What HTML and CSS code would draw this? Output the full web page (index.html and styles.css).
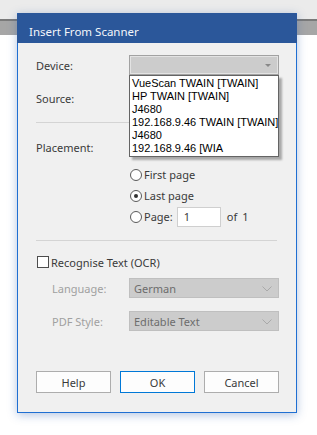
FILE: index.html
```html
<!DOCTYPE html>
<html lang="en">
<head>
  <meta charset="UTF-8">
  <meta name="viewport" content="width=device-width, initial-scale=1.0">
  <title>Insert From Scanner</title>
  <link rel="stylesheet" href="styles.css">
</head>
<body>

<!-- Window behind the dialog -->
<div class="desk">
  <div class="desk-top"></div>
  <div class="desk-band"></div>
  <div class="desk-page"></div>
</div>

<div class="dialog">
  <div class="titlebar">Insert From Scanner</div>

  <div class="content">
    <!-- Device / Source / Placement -->
    <div class="row">
      <label class="label">Device:</label>
      <div class="combo-wrap">
        <div class="combo combo-open">
          <span class="combo-text"></span>
          <span class="arrow-small"></span>
        </div>
        <ul class="droplist">
          <li>VueScan TWAIN [TWAIN]</li>
          <li>HP TWAIN [TWAIN]</li>
          <li>J4680</li>
          <li>192.168.9.46 TWAIN [TWAIN]</li>
          <li>J4680</li>
          <li>192.168.9.46 [WIA</li>
        </ul>
      </div>
    </div>

    <div class="row row-source">
      <label class="label">Source:</label>
      <div class="combo"></div>
    </div>

    <div class="sep sep-first"></div>

    <div class="row">
      <label class="label">Placement:</label>
      <div class="combo"></div>
    </div>

    <div class="radios">
      <div class="radio-row">
        <span class="radio"></span>
        <span>First page</span>
      </div>
      <div class="radio-row">
        <span class="radio checked"></span>
        <span>Last page</span>
      </div>
      <div class="radio-row">
        <span class="radio"></span>
        <span>Page:</span>
        <div class="page-input">1</div>
        <span class="page-of">of</span>
        <span>1</span>
      </div>
    </div>

    <div class="sep sep-second"></div>

    <!-- OCR -->
    <div class="check-row">
      <span class="checkbox"></span>
      <span>Recognise Text (OCR)</span>
    </div>

    <div class="row row-lang disabled">
      <label class="label sub">Language:</label>
      <div class="combo">
        <span class="combo-text">German</span>
        <svg class="chevron" width="10" height="6" viewBox="0 0 10 6">
          <polyline points="0.5,0.5 5,5 9.5,0.5" fill="none" stroke="#a9a9a9" stroke-width="1"/>
        </svg>
      </div>
    </div>

    <div class="row row-pdf disabled">
      <label class="label sub">PDF Style:</label>
      <div class="combo">
        <span class="combo-text">Editable Text</span>
        <svg class="chevron" width="10" height="6" viewBox="0 0 10 6">
          <polyline points="0.5,0.5 5,5 9.5,0.5" fill="none" stroke="#a9a9a9" stroke-width="1"/>
        </svg>
      </div>
    </div>

    <div class="buttons">
      <button class="btn">Help</button>
      <button class="btn btn-default">OK</button>
      <button class="btn">Cancel</button>
    </div>
  </div>
</div>

</body>
</html>
```

FILE: styles.css
```css
body {
  margin: 0;
  padding: 0;
  width: 317px;
  height: 435px;
  overflow: hidden;
  background-color: #fff;
  font-family: 'Noto Sans', 'Open Sans', sans-serif;
  font-size: 11px;
  color: #3a3a3a;
}

.desk-top {
  height: 19px;
  background-color: #ebebeb;
  border-bottom: 2px solid #7a7a7a;
}

.desk-band {
  height: 14px;
  background-color: #a6a6a6;
}

.desk-page {
  height: 400px;
  background-color: #fff;
}

.dialog {
  position: absolute;
  left: 17px;
  top: 13px;
  width: 280px;
  height: 400px;
  box-sizing: border-box;
  border: 1px solid #1f6fd2;
  border-top-color: #2b579a;
  background-color: #f0f0f0;
  box-shadow: 0 2px 9px rgba(40, 90, 170, 0.35);
}

.titlebar {
  height: 29px;
  box-sizing: border-box;
  margin: 0 -1px;
  padding: 10px 0 0 12px;
  background-color: #2b579a;
  color: #f4f6fa;
  font-size: 11.5px;
  line-height: 16px;
}

.content {
  padding: 12px 17px 0 18px;
}

.row {
  display: flex;
  align-items: center;
  height: 20px;
}

.label {
  width: 93px;
  flex-shrink: 0;
}

.label.sub {
  padding-left: 16px;
  width: 77px;
}

.combo-wrap {
  position: relative;
}

.combo {
  position: relative;
  width: 150px;
  height: 20px;
  box-sizing: border-box;
  border: 1px solid #adadad;
  background-color: #cccccc;
  display: flex;
  align-items: center;
}

.combo-open {
  border-color: #a2a2a2;
  box-shadow: inset 0 0 0 1px #e3e3e3;
}

.combo-text {
  padding-left: 4px;
  color: #6d6d6d;
}

.arrow-small {
  position: absolute;
  right: 7px;
  top: 8px;
  width: 0;
  height: 0;
  border-left: 3px solid transparent;
  border-right: 3px solid transparent;
  border-top: 3px solid #888;
}

.chevron {
  position: absolute;
  right: 6px;
  top: 7px;
}

/* open device list */
.droplist {
  position: absolute;
  left: 0;
  top: 20px;
  width: 150px;
  height: 82px;
  box-sizing: border-box;
  margin: 0;
  padding: 1px 0 0 2px;
  list-style: none;
  background-color: #fff;
  border: 1px solid #646464;
  box-shadow: 3px 3px 2px rgba(0, 0, 0, 0.3);
  font-family: 'Liberation Sans', Arial, sans-serif;
  font-size: 11px;
  line-height: 13px;
  color: #000;
  white-space: nowrap;
  overflow: hidden;
  z-index: 2;
}

.row-source {
  margin-top: 13px;
}

.sep {
  height: 1px;
  width: 241px;
  background-color: #d4d4d4;
}

.sep-first {
  margin: 14px 0 14px 0;
}

.radios {
  margin-top: 7px;
  padding-left: 94px;
}

.radio-row {
  display: flex;
  align-items: center;
  height: 21px;
}

.radio {
  width: 12px;
  height: 12px;
  box-sizing: border-box;
  border: 1px solid #5a5a5a;
  border-radius: 50%;
  background-color: #fff;
  margin-right: 2px;
  display: flex;
  align-items: center;
  justify-content: center;
}

.radio.checked::after {
  content: '';
  width: 4px;
  height: 4px;
  border-radius: 50%;
  background-color: #333;
}

.page-input {
  width: 44px;
  height: 20px;
  box-sizing: border-box;
  margin-left: 4px;
  padding-left: 6px;
  border: 1px solid #cfcfcf;
  background-color: #fff;
  line-height: 18px;
}

.page-of {
  margin: 0 5px 0 6px;
}

.sep-second {
  margin: 13px 0 11px 0;
}

.check-row {
  display: flex;
  align-items: center;
  height: 20px;
}

.checkbox {
  width: 12px;
  height: 12px;
  box-sizing: border-box;
  margin-left: 1px;
  margin-right: 2px;
  border: 1px solid #4d4d4d;
  background-color: #fff;
}

.disabled .label {
  color: #a0a0a0;
}

.disabled .combo {
  border-color: #bfbfbf;
}

.row-lang {
  margin-top: 6px;
}

.row-pdf {
  margin-top: 13px;
}

.buttons {
  display: flex;
  gap: 9px;
  margin-top: 40px;
}

.btn {
  width: 75px;
  height: 22px;
  box-sizing: border-box;
  border: 1px solid #adadad;
  background-color: #fdfdfd;
  font-family: 'Noto Sans', 'Open Sans', sans-serif;
  font-size: 11px;
  color: #3a3a3a;
  padding: 0;
}

.btn-default {
  border-color: #0078d7;
}
```
